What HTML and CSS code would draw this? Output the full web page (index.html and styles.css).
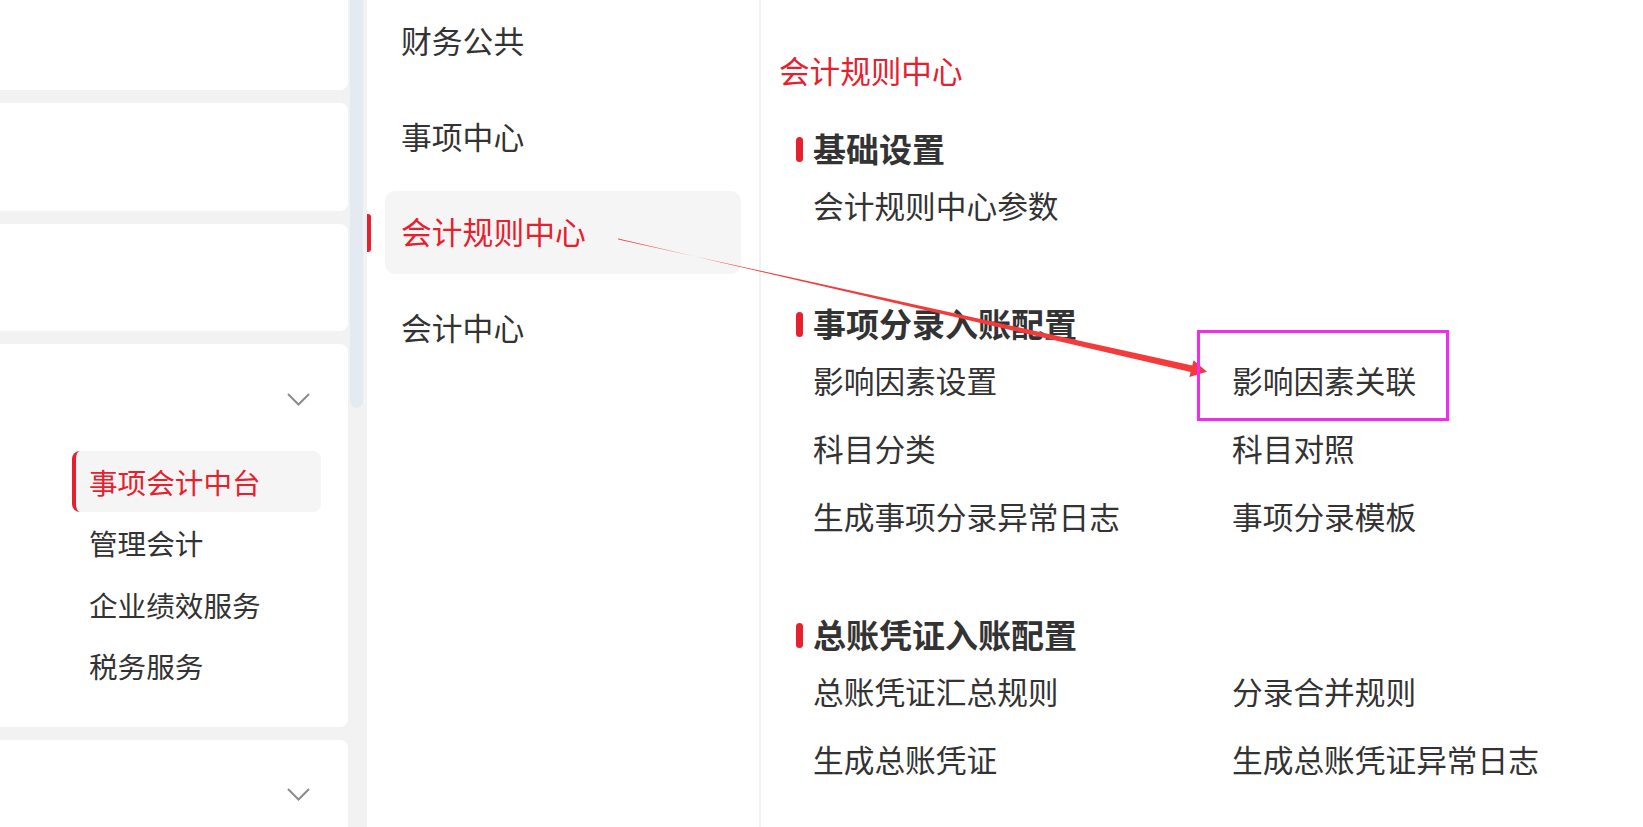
FILE: index.html
```html
<!DOCTYPE html>
<html lang="zh-CN">
<head>
<meta charset="utf-8">
<title>会计规则中心</title>
<link rel="stylesheet" href="styles.css">
</head>
<body>
<div class="page">
  <aside class="side">
    <div class="cards">
      <div class="card card-a"></div>
      <div class="card card-b"></div>
      <div class="card card-c"></div>
      <div class="card card-d">
        <div class="card-head">
          <svg class="chev" width="23" height="13" viewBox="0 0 23 13"><polyline points="1,1 11.5,11.5 22,1" fill="none" stroke="#8c8c8c" stroke-width="2"/></svg>
        </div>
        <ul class="sub-list">
          <li class="sub-item active">事项会计中台</li>
          <li class="sub-item">管理会计</li>
          <li class="sub-item">企业绩效服务</li>
          <li class="sub-item">税务服务</li>
        </ul>
      </div>
      <div class="card card-e">
        <div class="card-head head-e">
          <svg class="chev" width="23" height="13" viewBox="0 0 23 13"><polyline points="1,1 11.5,11.5 22,1" fill="none" stroke="#8c8c8c" stroke-width="2"/></svg>
        </div>
      </div>
    </div>
    <div class="track"><div class="thumb"></div></div>
  </aside>

  <nav class="nav">
    <div class="nav-row"><span class="nav-bar"></span><div class="nav-item">财务公共</div></div>
    <div class="nav-row"><span class="nav-bar"></span><div class="nav-item">事项中心</div></div>
    <div class="nav-row selected"><span class="nav-bar"></span><div class="nav-item">会计规则中心</div></div>
    <div class="nav-row"><span class="nav-bar"></span><div class="nav-item">会计中心</div></div>
  </nav>

  <main class="content">
    <h1 class="title">会计规则中心</h1>

    <section class="group g1">
      <h2 class="group-head"><span class="mark"></span>基础设置</h2>
      <div class="links">
        <div class="link">会计规则中心参数</div>
      </div>
    </section>

    <section class="group">
      <h2 class="group-head"><span class="mark"></span>事项分录入账配置</h2>
      <div class="links">
        <div class="link">影响因素设置</div>
        <div class="link">影响因素关联</div>
        <div class="link">科目分类</div>
        <div class="link">科目对照</div>
        <div class="link">生成事项分录异常日志</div>
        <div class="link">事项分录模板</div>
      </div>
    </section>

    <section class="group">
      <h2 class="group-head"><span class="mark"></span>总账凭证入账配置</h2>
      <div class="links">
        <div class="link">总账凭证汇总规则</div>
        <div class="link">分录合并规则</div>
        <div class="link">生成总账凭证</div>
        <div class="link">生成总账凭证异常日志</div>
      </div>
    </section>
  </main>

  <svg class="annot" width="1643" height="827" viewBox="0 0 1643 827">
    <polygon points="618,238.5 1190.6,371.9 1189.4,377 1207,371.8 1193.5,360.3 1192.3,365.4 618.2,239.6" fill="#f43b3b"/>
    <rect x="1198.5" y="331.5" width="249" height="88" fill="none" stroke="#f02cf0" stroke-width="3"/>
  </svg>
</div>
</body>
</html>
```

FILE: styles.css
```css
* { box-sizing: border-box; }

html, body {
  margin: 0;
  padding: 0;
  background: #ffffff;
}

body {
  font-family: "Noto Sans CJK SC", "Noto Sans", sans-serif;
  color: #333333;
}

.page {
  position: relative;
  width: 1643px;
  height: 827px;
  overflow: hidden;
  display: flex;
}

/* ---------- left column ---------- */
.side {
  width: 367px;
  flex: none;
  display: flex;
  background: #f2f2f2;
}

.cards {
  width: 348px;
  display: flex;
  flex-direction: column;
  gap: 13px;
  margin-top: -20px;
}

.card {
  background: #ffffff;
  border-radius: 0 8px 8px 0;
  flex: none;
}

.card-a { height: 110px; }
.card-b { height: 108px; }
.card-c { height: 107px; }
.card-d { height: 383px; }
.card-e { height: 120px; }

.card-head {
  height: 107px;
  padding-top: 49px;
  padding-right: 38px;
  display: flex;
  justify-content: flex-end;
  align-items: flex-start;
}

.head-e { padding-top: 48px; }

.chev { display: block; }

.sub-list {
  list-style: none;
  margin: 0 0 0 72px;
  padding: 0;
  width: 249px;
}

.sub-item {
  height: 61.3px;
  line-height: 61px;
  font-size: 28.6px;
  padding-left: 17px;
  color: #333333;
  white-space: nowrap;
}

.sub-item.active {
  background: #f5f5f5;
  border-left: 4px solid #e8202e;
  border-radius: 8px;
  padding-left: 13px;
  color: #e8202e;
}

.track {
  width: 19px;
  padding-left: 2px;
}

.thumb {
  width: 13px;
  height: 408px;
  background: #e4eaf2;
  border-radius: 0 0 7px 7px;
}

/* ---------- middle nav ---------- */
.nav {
  width: 394px;
  flex: none;
  border-right: 2px solid #f2f2f2;
  display: flex;
  flex-direction: column;
  gap: 12.5px;
}

.nav-row {
  display: flex;
  align-items: center;
  height: 83px;
}

.nav-bar {
  width: 4px;
  height: 38px;
  border-radius: 0 3px 3px 0;
  flex: none;
}

.nav-item {
  margin-left: 14px;
  width: 356px;
  height: 83px;
  line-height: 79px;
  padding-bottom: 4px;
  padding-left: 16px;
  font-size: 30.8px;
  border-radius: 10px;
  color: #333333;
  white-space: nowrap;
}

.nav-row.selected .nav-bar { background: #e8202e; }

.nav-row.selected .nav-item {
  background: #f5f5f5;
  color: #e8202e;
}

/* ---------- right content ---------- */
.content {
  flex: 1;
  padding: 50px 0 0 18px;
}

.title {
  margin: 0;
  font-size: 30.6px;
  line-height: 40px;
  font-weight: 400;
  color: #e8202e;
}

.group {
  margin-top: 64px;
  padding-left: 17px;
}

.group.g1 { margin-top: 38px; }

.group-head {
  margin: 0;
  display: flex;
  align-items: center;
  height: 40px;
  font-size: 33px;
  line-height: 40px;
  font-weight: 700;
  color: #333333;
}

.mark {
  width: 7px;
  height: 25px;
  border-radius: 4px;
  background: #e8202e;
  margin-right: 10px;
  margin-top: 3px;
  flex: none;
}

.links {
  margin-top: 3px;
  padding-left: 17px;
  display: grid;
  grid-template-columns: 419px auto;
}

.link {
  height: 68px;
  line-height: 68px;
  font-size: 30.7px;
  color: #333333;
  white-space: nowrap;
}

/* ---------- annotation overlay ---------- */
.annot {
  position: absolute;
  left: 0;
  top: 0;
  pointer-events: none;
}
```
